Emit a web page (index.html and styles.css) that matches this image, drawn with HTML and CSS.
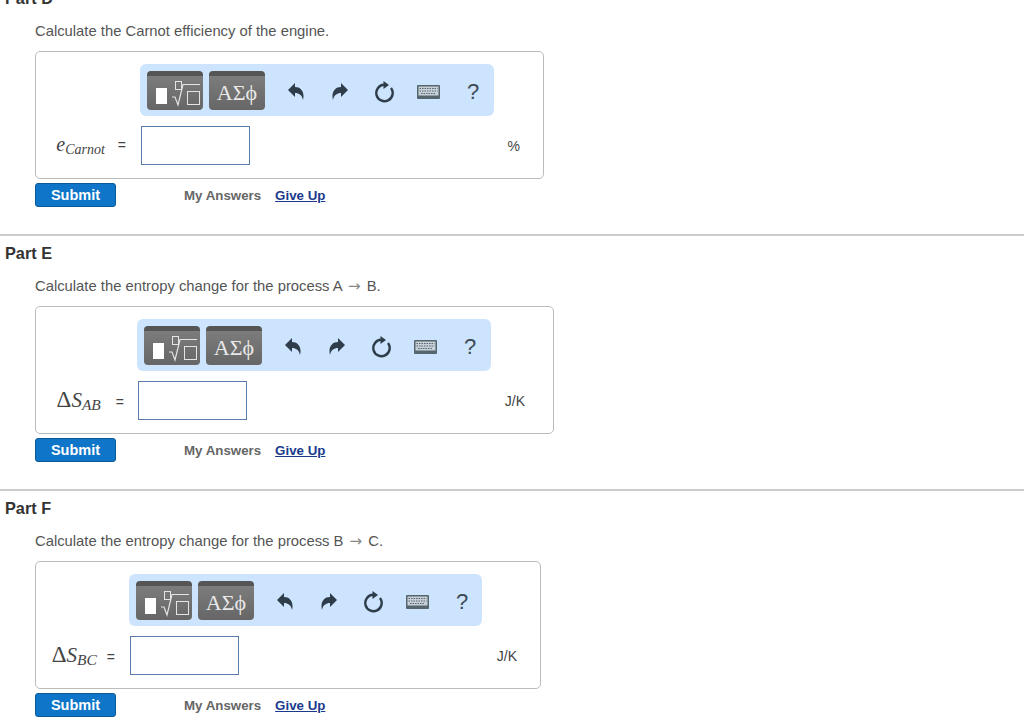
FILE: index.html
```html
<!DOCTYPE html>
<html>
<head>
    <title>Parts D to F</title>
    <link rel="stylesheet" href="styles.css">
</head>
<body>
    <svg class="defs" width="0" height="0">
        <symbol id="templates" viewBox="0 0 56 39">
            <rect x="9" y="17" width="11" height="16" fill="#fff"/>
            <rect x="28.5" y="10.5" width="6" height="8" fill="none" stroke="#e4e4e4"/>
            <path d="M25 26 H28 L31 34 L36 13.5 H53" fill="none" stroke="#e4e4e4" stroke-width="1.2"/>
            <rect x="40.5" y="20.5" width="12" height="13" fill="none" stroke="#e4e4e4"/>
        </symbol>
        <symbol id="undo" viewBox="0 0 16 17">
            <path d="M0 7 L7 0 V4 C13 4 17 9 15 17 C14 12 11 10 7 10 V14 Z" fill="#2f3d4a"/>
        </symbol>
        <symbol id="reset" viewBox="0 0 20 22">
            <path d="M16 7 A8.200 8.200 0 1 1 9 3.800" fill="none" stroke="#2f3d4a" stroke-width="2.4"/>
            <path d="M8.500 0 L14 4 L8.500 8 Z" fill="#2f3d4a"/>
        </symbol>
        <symbol id="keyboard" viewBox="0 0 23 14">
            <rect width="23" height="14" rx="1" fill="#56666f"/>
            <rect x="1.500" y="1.500" width="20" height="9" fill="#c6d0d6"/>
            <path d="M2.500 3.500 H20.500 M2.500 6 H20.500 M4 8.500 H19" stroke="#56666f" stroke-dasharray="1.500 1"/>
        </symbol>
    </svg>

    <!-- part D -->
    <div class="part">
        <h2>Part D</h2>
        <p class="prompt">Calculate the Carnot efficiency of the engine.</p>
        <div class="box box-d">
            <div class="toolbar">
                <button class="tool-btn"><svg width="56" height="39"><use href="#templates"/></svg></button>
                <button class="tool-btn greek">ΑΣϕ</button>
                <span class="tool tool-first"><svg width="16" height="17"><use href="#undo"/></svg></span>
                <span class="tool"><svg class="flip" width="16" height="17"><use href="#undo"/></svg></span>
                <span class="tool"><svg width="20" height="22"><use href="#reset"/></svg></span>
                <span class="tool"><svg width="23" height="14"><use href="#keyboard"/></svg></span>
                <span class="tool help">?</span>
            </div>
            <div class="label"><span class="var var-e">e</span><sub class="sub-long">Carnot</sub><span class="eq">=</span></div>
            <input class="answer" type="text">
            <div class="unit">%</div>
        </div>
        <div class="actions">
            <button class="submit">Submit</button>
            <span class="my-answers">My Answers</span>
            <a class="give-up" href="#">Give Up</a>
        </div>
    </div>

    <!-- part E -->
    <div class="part">
        <h2>Part E</h2>
        <p class="prompt">Calculate the entropy change for the process A <span class="arrow">→</span> B.</p>
        <div class="box box-e">
            <div class="toolbar">
                <button class="tool-btn"><svg width="56" height="39"><use href="#templates"/></svg></button>
                <button class="tool-btn greek">ΑΣϕ</button>
                <span class="tool tool-first"><svg width="16" height="17"><use href="#undo"/></svg></span>
                <span class="tool"><svg class="flip" width="16" height="17"><use href="#undo"/></svg></span>
                <span class="tool"><svg width="20" height="22"><use href="#reset"/></svg></span>
                <span class="tool"><svg width="23" height="14"><use href="#keyboard"/></svg></span>
                <span class="tool help">?</span>
            </div>
            <div class="label"><span class="delta">Δ</span><span class="var">S</span><sub>AB</sub><span class="eq">=</span></div>
            <input class="answer" type="text">
            <div class="unit">J/K</div>
        </div>
        <div class="actions">
            <button class="submit">Submit</button>
            <span class="my-answers">My Answers</span>
            <a class="give-up" href="#">Give Up</a>
        </div>
    </div>

    <!-- part F -->
    <div class="part">
        <h2>Part F</h2>
        <p class="prompt">Calculate the entropy change for the process B <span class="arrow">→</span> C.</p>
        <div class="box box-f">
            <div class="toolbar">
                <button class="tool-btn"><svg width="56" height="39"><use href="#templates"/></svg></button>
                <button class="tool-btn greek">ΑΣϕ</button>
                <span class="tool tool-first"><svg width="16" height="17"><use href="#undo"/></svg></span>
                <span class="tool"><svg class="flip" width="16" height="17"><use href="#undo"/></svg></span>
                <span class="tool"><svg width="20" height="22"><use href="#reset"/></svg></span>
                <span class="tool"><svg width="23" height="14"><use href="#keyboard"/></svg></span>
                <span class="tool help">?</span>
            </div>
            <div class="label"><span class="delta">Δ</span><span class="var">S</span><sub>BC</sub><span class="eq">=</span></div>
            <input class="answer" type="text">
            <div class="unit">J/K</div>
        </div>
        <div class="actions">
            <button class="submit">Submit</button>
            <span class="my-answers">My Answers</span>
            <a class="give-up" href="#">Give Up</a>
        </div>
    </div>
</body>
</html>
```

FILE: styles.css
```css
* { margin: 0; padding: 0; box-sizing: border-box; font-family: "Liberation Sans", Arial, sans-serif; }
html { height: 100%; overflow: hidden; background: white; }
body { margin-top: -21px; color: #444; font-size: 14px; }
.defs { position: absolute; }

.part { height: 255px; padding-top: 9px; border-top: 2px solid #ccc; }
.part h2 { margin-left: 5px; font-size: 16.3px; line-height: 16px; color: #333; }
.prompt { margin: 17px 0 12px 35px; font-size: 14.8px; line-height: 16px; color: #555; }
.arrow { margin: 0 2px; font-family: "DejaVu Sans", sans-serif; font-size: 15px; line-height: 1; color: #888; }

.box { display: grid; grid-template-rows: 52px 39px; align-items: center; margin-left: 35px; height: 128px; padding: 12px 0 13px; row-gap: 10px; border: 1px solid #bbb; border-radius: 5px; }
.box-d { width: 509px; grid-template-columns: 104px 114px 1fr; }
.box-e { width: 519px; grid-template-columns: 101px 114px 1fr; }
.box-f { width: 506px; grid-template-columns: 93px 114px 1fr; }

.toolbar { grid-column: 2 / 4; display: flex; align-items: center; width: 354px; height: 52px; padding-left: 7px; background: #cce4fd; border-radius: 6px; }
.box-f .toolbar { width: 353px; }
.tool-btn { flex: none; width: 56px; height: 39px; margin-right: 6px; border: none; border-radius: 4px; background: linear-gradient(#555 5px, #7c7c7c 5px, #666); overflow: hidden; }
.tool-btn svg { display: block; }
.greek { padding-top: 5px; font-family: "Liberation Serif", serif; font-size: 22px; color: #e8e8e8; }
.tool { flex: none; display: flex; justify-content: center; align-items: center; width: 44.25px; height: 39px; padding-top: 3px; }
.tool-first { margin-left: 3px; }
.flip { transform: scaleX(-1); }
.help { font-size: 22px; color: #3c4a56; }

.label { padding-right: 14px; text-align: right; white-space: nowrap; color: #444; }
.var { font-family: "Liberation Serif", serif; font-style: italic; font-size: 21px; }
.var-e { font-size: 20px; vertical-align: -1px; }
.delta { font-family: "Liberation Serif", serif; font-size: 23px; }
.label sub { font-family: "Liberation Serif", serif; font-style: italic; font-size: 15.5px; vertical-align: -3px; }
.label .sub-long { font-size: 14px; vertical-align: -4px; }
.eq { margin-left: 15px; font-size: 14px; }
.box-d .eq { margin-left: 13px; }
.box-e .label { padding-right: 13px; }
.box-f .eq { margin-left: 10px; }

.answer { width: 109px; height: 39px; margin-left: 1px; border: 1px solid #5b7bae; background: white; }
.unit { grid-column: 3; padding-right: 23px; text-align: right; color: #444; }
.box-e .unit { padding-right: 28px; }

.actions { display: flex; align-items: center; margin: 4px 0 0 35px; height: 24px; }
.submit { width: 81px; height: 24px; background: #0e75c8; color: white; border: 1px solid #0b5a98; border-radius: 3px; font-size: 14.5px; font-weight: bold; }
.my-answers { margin: 1px 0 0 68px; font-size: 13.3px; font-weight: bold; color: #666; }
.give-up { margin: 1px 0 0 14px; font-size: 13.3px; font-weight: bold; color: #1b3a8c; }
```
